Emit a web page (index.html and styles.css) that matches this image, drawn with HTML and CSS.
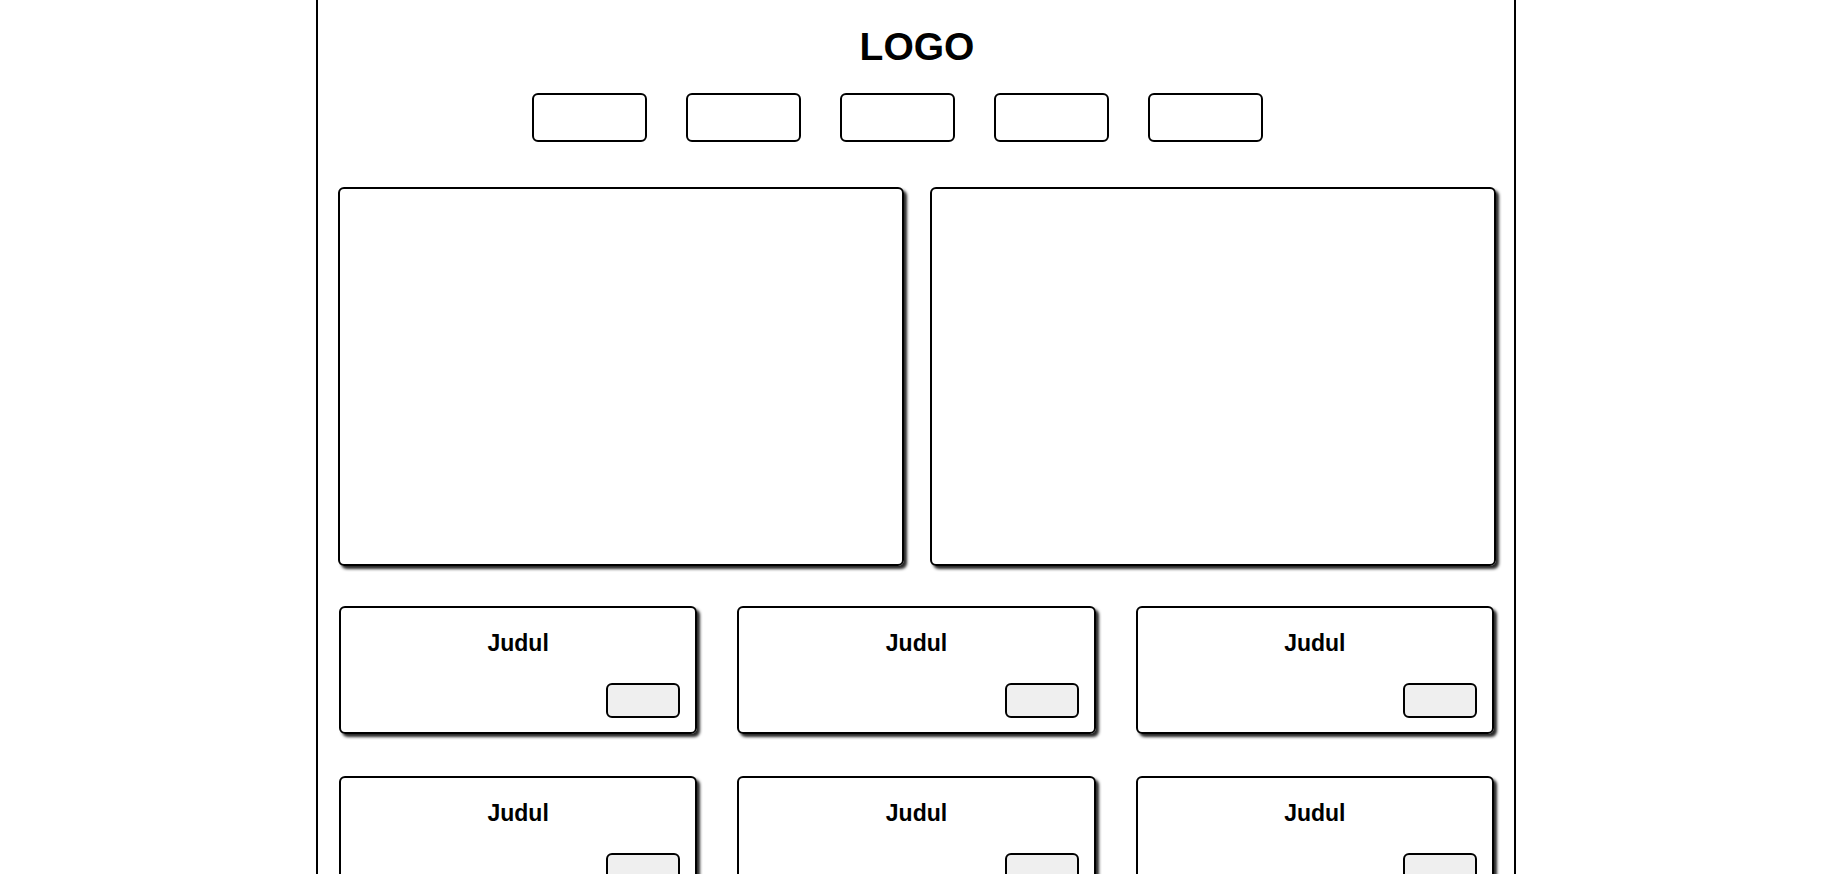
FILE: index.html
```html
<!DOCTYPE html>
<html>
<head>
    <title>Wireframe</title>
    <meta name="viewport" content="width=device-width, initial-scale=1">
    <link rel="stylesheet" href="styles.css">
</head>
<body>

    <div class="container">
        <h1 class="logo">LOGO</h1>

        <nav class="menu">
            <a class="menu-item" href="#"></a>
            <a class="menu-item" href="#"></a>
            <a class="menu-item" href="#"></a>
            <a class="menu-item" href="#"></a>
            <a class="menu-item" href="#"></a>
        </nav>

        <div class="banners">
            <div class="banner"></div>
            <div class="banner"></div>
        </div>

        <div class="cards">
            <div class="card">
                <h3 class="card-title">Judul</h3>
                <div class="card-actions"><button class="card-button"></button></div>
            </div>
            <div class="card">
                <h3 class="card-title">Judul</h3>
                <div class="card-actions"><button class="card-button"></button></div>
            </div>
            <div class="card">
                <h3 class="card-title">Judul</h3>
                <div class="card-actions"><button class="card-button"></button></div>
            </div>
            <div class="card">
                <h3 class="card-title">Judul</h3>
                <div class="card-actions"><button class="card-button"></button></div>
            </div>
            <div class="card">
                <h3 class="card-title">Judul</h3>
                <div class="card-actions"><button class="card-button"></button></div>
            </div>
            <div class="card">
                <h3 class="card-title">Judul</h3>
                <div class="card-actions"><button class="card-button"></button></div>
            </div>
        </div>
    </div>

</body>
</html>
```

FILE: styles.css
```css
* {
    box-sizing: border-box;
}

body {
    margin: 0;
    padding: 0 0 0 2px;
    background-color: #fff;
    font-family: "Liberation Sans", Arial, sans-serif;
    color: #000;
}

.container {
    width: 1200px;
    min-height: 100vh;
    margin: 0 auto;
    padding: 25px 18px 40px 20px;
    border-left: 2px solid #000;
    border-right: 2px solid #000;
}

.logo {
    margin: 0;
    font-size: 39px;
    font-weight: bold;
    text-align: center;
}

.menu {
    display: flex;
    justify-content: center;
    margin-top: 24px;
}

.menu-item {
    display: block;
    width: 115px;
    height: 49px;
    margin-right: 39px;
    border: 2px solid #000;
    border-radius: 6px;
    background-color: #fff;
}

.banners {
    display: grid;
    grid-template-columns: 1fr 1fr;
    gap: 26px;
    margin-top: 45px;
}

.banner {
    height: 379px;
    border: 2px solid #000;
    border-radius: 6px;
    box-shadow: 3px 3px 3px rgba(0,0,0,0.85);
}

.cards {
    display: grid;
    grid-template-columns: repeat(3, 1fr);
    gap: 42px 40px;
    margin-top: 40px;
    padding: 0 2px 0 1px;
}

.card {
    padding: 22px 15px 14px;
    border: 2px solid #000;
    border-radius: 6px;
    box-shadow: 3px 3px 3px rgba(0,0,0,0.85);
    text-align: center;
}

.card-title {
    margin: 0 0 26px;
    font-size: 23px;
    font-weight: bold;
}

.card-actions {
    display: flex;
    justify-content: flex-end;
}

.card-button {
    width: 74px;
    height: 35px;
    border: 2px solid #000;
    border-radius: 6px;
    background-color: #efefef;
    cursor: pointer;
}
```
